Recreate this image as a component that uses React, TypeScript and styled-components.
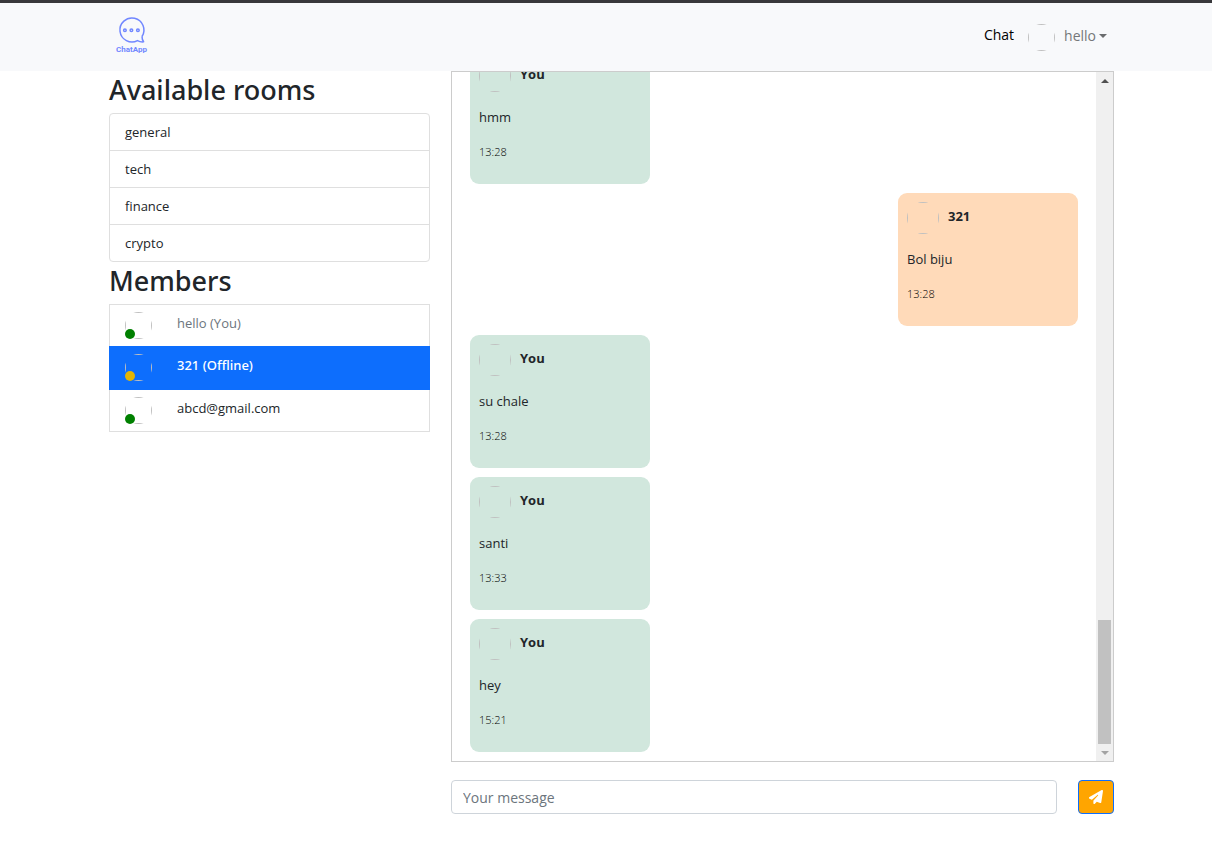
import React from 'react';
import styled, { createGlobalStyle, css } from 'styled-components';
import { FaPaperPlane } from 'react-icons/fa6';

const GlobalStyle = createGlobalStyle`
  *, *::before, *::after { box-sizing: border-box; }
  body {
    margin: 0;
    background: #fff;
    color: #212529;
    font-family: 'Open Sans', 'Noto Sans', sans-serif;
    font-size: 13px;
    line-height: 22px;
  }
  button, input { font: inherit; color: inherit; }
  h2, p, ul { margin: 0; padding: 0; }
  ul { list-style: none; }
`;

const Page = styled.div`
  min-height: 100vh;
  border-top: 3px solid #38383b;
`;

const Container = styled.div`
  max-width: 1027px;
  margin: 0 auto;
  padding: 0 0 0 11px;
  box-sizing: content-box;
`;

const Inner = styled.div`
  padding: 0 11px;
`;

const Navbar = styled.header`
  background: #f8f9fb;
`;

const NavRow = styled.div`
  display: flex;
  align-items: center;
  justify-content: space-between;
  height: 68px;
  padding: 0 18px 0 11px;
`;

const Brand = styled.a`
  display: block;
  width: 45px;
  height: 45px;
`;

const Nav = styled.nav`
  display: flex;
  align-items: center;
`;

const NavLink = styled.a`
  padding: 0 14px 4px 0;
  color: #000;
  font-size: 14px;
  text-decoration: none;
`;

const UserMenu = styled.button`
  display: flex;
  align-items: center;
  gap: 9px;
  padding: 0;
  border: 0;
  background: none;
  color: #757779;
  font-size: 14px;
`;

const UserName = styled.span`
  display: flex;
  align-items: center;
  gap: 3px;
  padding-bottom: 2px;
`;

const Caret = styled.span`
  border: 4px solid transparent;
  border-top-color: #6a6c6e;
  border-bottom: 0;
`;

const AvatarCircle = styled.span<{ $size: number }>`
  display: block;
  flex: none;
  width: ${(p) => p.$size}px;
  height: ${(p) => p.$size}px;
  border-radius: 50%;
  overflow: hidden;
`;

const AvatarFrame = styled.span`
  display: block;
  height: 100%;
  border: 1px solid #c0c0c0;
`;

const Avatar = ({ size }: { size: number }) => (
  <AvatarCircle $size={size}>
    <AvatarFrame />
  </AvatarCircle>
);

const Columns = styled.main`
  display: grid;
  grid-template-columns: minmax(0, 321fr) minmax(0, 663fr);
  gap: 21px;
`;

const Heading = styled.h2`
  padding: 1px 0 6px;
  font-family: 'Noto Sans', 'Open Sans', sans-serif;
  font-size: 27px;
  font-weight: 500;
  line-height: 35px;
  white-space: nowrap;
`;

const RoomList = styled.ul`
  border: 1px solid #dfdfdf;
  border-radius: 4px;
`;

const RoomItem = styled.li`
  & + & { border-top: 1px solid #dfdfdf; }
`;

const RoomButton = styled.button`
  display: block;
  width: 100%;
  padding: 7px 15px;
  border: 0;
  background: none;
  text-align: left;
`;

const MemberList = styled.ul`
  border: 1px solid #dfdfdf;
`;

const MemberItem = styled.li<{ $active?: boolean }>`
  ${(p) => p.$active && css`
    margin: 0 -1px;
    padding: 1px 1px 2px;
    background: #0d6efd;
    color: #fff;
    font-family: 'Noto Sans', 'Open Sans', sans-serif;
    font-weight: 500;
  `}
`;

const MemberButton = styled.button`
  display: flex;
  gap: 25px;
  width: 100%;
  padding: 7px 15px;
  border: 0;
  background: none;
  text-align: left;
  &:disabled { color: #6c757d; }
`;

const MemberPicture = styled.span`
  position: relative;
  display: block;
`;

const StatusDot = styled.span<{ $online: boolean }>`
  position: absolute;
  left: 0;
  bottom: 0;
  width: 10px;
  height: 10px;
  border-radius: 50%;
  background: ${(p) => (p.$online ? '#008000' : '#e3b505')};
`;

const ChatPanel = styled.section`
  display: flex;
  height: calc(100vh - 166px);
  border: 1px solid #ccc;
`;

const Messages = styled.div`
  flex: 1;
  display: flex;
  flex-direction: column;
  justify-content: flex-end;
  gap: 9px;
  padding: 0 18px 9px;
  overflow: hidden;
`;

const Message = styled.article<{ $own: boolean }>`
  flex: none;
  width: 180px;
  padding: 9px 9px 24px;
  border-radius: 9px;
  align-self: ${(p) => (p.$own ? 'flex-start' : 'flex-end')};
  background: ${(p) => (p.$own ? '#d1e7dd' : '#ffdab9')};
`;

const MessageHeader = styled.div`
  display: flex;
  gap: 9px;
  height: 32px;
  margin-bottom: 14px;
  font-weight: 700;
  line-height: 28px;
`;

const MessageText = styled.p`
  margin-bottom: 15px;
`;

const MessageTime = styled.time`
  display: block;
  color: #000;
  font-size: 11px;
  font-weight: 300;
  line-height: 17px;
`;

const ScrollBar = styled.div`
  display: flex;
  flex-direction: column;
  align-items: center;
  justify-content: space-between;
  width: 17px;
  background: #f0f0f0;
`;

const ScrollArrow = styled.span<{ $down?: boolean }>`
  width: 8px;
  margin: 7px 0 6px;
  border: 4px solid transparent;
  ${(p) => p.$down
    ? css`border-top-color: #a3a3a3; border-bottom: 0;`
    : css`border-bottom-color: #505050; border-top: 0;`}
`;

const ScrollTrack = styled.div`
  flex: 1;
  display: flex;
  flex-direction: column;
  justify-content: flex-end;
`;

const ScrollThumb = styled.div`
  width: 13px;
  height: 19%;
  background: #c1c1c1;
`;

const Composer = styled.form`
  display: flex;
  gap: 21px;
  padding: 18px 0;
`;

const MessageInput = styled.input`
  flex: 1;
  min-width: 0;
  height: 34px;
  padding: 0 11px;
  border: 1px solid #ced4da;
  border-radius: 4px;
  font-size: 14px;
  &::placeholder { color: #6c757d; opacity: 1; }
`;

const SendButton = styled.button`
  display: flex;
  align-items: center;
  justify-content: center;
  width: 36px;
  height: 34px;
  padding: 0;
  border: 1px solid #0d6efd;
  border-radius: 4px;
  background: orange;
  color: #fff;
`;

const Logo = () => (
  <svg width="45" height="45" viewBox="0 0 45 45" role="img" aria-label="ChatApp">
    <g fill="none" stroke="#7187ff" strokeWidth="1.5" strokeLinejoin="round">
      <path d="M33 21.5A12 12 0 1 0 28.5 25.6Q31.5 27.2 34.6 26.8Q33 24.5 33 21.5" />
      <circle cx="15.9" cy="15.2" r="1.3" />
      <circle cx="22.4" cy="15.2" r="1.3" />
      <circle cx="28.9" cy="15.2" r="1.3" />
    </g>
    <text x="22.5" y="37" textAnchor="middle" fontFamily="Roboto, sans-serif" fontSize="8" fontWeight="700" fill="#7187ff">
      ChatApp
    </text>
  </svg>
);

const rooms = ['general', 'tech', 'finance', 'crypto'];

const members = [
  { label: 'hello (You)', online: true, self: true },
  { label: '321 (Offline)', online: false, active: true },
  { label: 'abcd@gmail.com', online: true },
];

const messages = [
  { from: 'You', text: 'hmm', time: '13:28' },
  { from: '321', text: 'Bol biju', time: '13:28' },
  { from: 'You', text: 'su chale', time: '13:28' },
  { from: 'You', text: 'santi', time: '13:33' },
  { from: 'You', text: 'hey', time: '15:21' },
];

export default function App() {
  return (
    <Page>
      <GlobalStyle />
      <Navbar>
        <Container>
          <NavRow>
            <Brand href="#"><Logo /></Brand>
            <Nav>
              <NavLink href="#">Chat</NavLink>
              <UserMenu type="button">
                <Avatar size={27} />
                <UserName>hello <Caret /></UserName>
              </UserMenu>
            </Nav>
          </NavRow>
        </Container>
      </Navbar>
      <Container>
        <Inner>
          <Columns>
            <aside>
              <Heading>Available rooms</Heading>
              <RoomList>
                {rooms.map((room) => (
                  <RoomItem key={room}>
                    <RoomButton type="button">{room}</RoomButton>
                  </RoomItem>
                ))}
              </RoomList>
              <Heading>Members</Heading>
              <MemberList>
                {members.map((m) => (
                  <MemberItem key={m.label} $active={m.active}>
                    <MemberButton type="button" disabled={m.self}>
                      <MemberPicture>
                        <Avatar size={27} />
                        <StatusDot $online={m.online} />
                      </MemberPicture>
                      {m.label}
                    </MemberButton>
                  </MemberItem>
                ))}
              </MemberList>
            </aside>
            <div>
              <ChatPanel>
                <Messages>
                  {messages.map((m, i) => (
                    <Message key={i} $own={m.from === 'You'}>
                      <MessageHeader>
                        <Avatar size={32} />
                        {m.from}
                      </MessageHeader>
                      <MessageText>{m.text}</MessageText>
                      <MessageTime>{m.time}</MessageTime>
                    </Message>
                  ))}
                </Messages>
                <ScrollBar aria-hidden="true">
                  <ScrollArrow />
                  <ScrollTrack><ScrollThumb /></ScrollTrack>
                  <ScrollArrow $down />
                </ScrollBar>
              </ChatPanel>
              <Composer onSubmit={(e) => e.preventDefault()}>
                <MessageInput type="text" placeholder="Your message" aria-label="Your message" />
                <SendButton type="submit" aria-label="Send">
                  <FaPaperPlane size={14} />
                </SendButton>
              </Composer>
            </div>
          </Columns>
        </Inner>
      </Container>
    </Page>
  );
}
